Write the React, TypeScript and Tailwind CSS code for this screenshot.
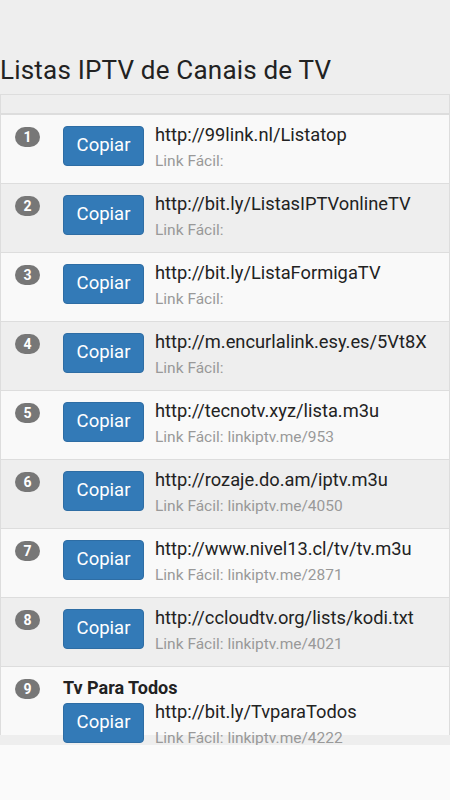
import React from 'react';

type Lista = {
  url: string;
  facil: string;
  title?: string;
};

const LISTAS: Lista[] = [
  { url: 'http://99link.nl/Listatop', facil: '' },
  { url: 'http://bit.ly/ListasIPTVonlineTV', facil: '' },
  { url: 'http://bit.ly/ListaFormigaTV', facil: '' },
  { url: 'http://m.encurlalink.esy.es/5Vt8X', facil: '' },
  { url: 'http://tecnotv.xyz/lista.m3u', facil: 'linkiptv.me/953' },
  { url: 'http://rozaje.do.am/iptv.m3u', facil: 'linkiptv.me/4050' },
  { url: 'http://www.nivel13.cl/tv/tv.m3u', facil: 'linkiptv.me/2871' },
  { url: 'http://ccloudtv.org/lists/kodi.txt', facil: 'linkiptv.me/4021' },
  { url: 'http://bit.ly/TvparaTodos', facil: 'linkiptv.me/4222', title: 'Tv Para Todos' },
];

function Row({ item, index }: { item: Lista; index: number }) {
  const odd = index % 2 === 0;
  return (
    <div
      className={`flex shrink-0 ${index > 0 ? 'h-[69px] border-t border-[#dddddd]' : 'h-[68px]'} ${
        odd ? 'bg-[#f9f9f9]' : 'bg-[#eeeeee]'
      }`}
    >
      {/* numero */}
      <div className="w-[54px] shrink-0 pl-[14px] pt-[12px]">
        <span className="flex h-[20px] w-[25px] items-center justify-center rounded-full bg-[#777777] text-[14px] font-bold leading-none text-white">
          {index + 1}
        </span>
      </div>

      <div className={`flex-1 pl-[8px] ${item.title ? 'pt-[9px]' : 'pt-[7px]'}`}>
        {item.title && (
          <div className="text-[18px] font-bold leading-[23px] text-[#222222]">{item.title}</div>
        )}
        <div className="flex items-start">
          <button className="mt-[4px] h-[40px] w-[81px] shrink-0 rounded-[4px] border border-[#2e6da4] bg-[#337ab7] text-[18.5px] text-white">
            Copiar
          </button>
          <div className="pl-[11px]">
            <div className="whitespace-nowrap text-[18.3px] leading-[25px] text-[#222222]">{item.url}</div>
            <div className="mt-[3px] whitespace-nowrap text-[15.5px] leading-[22px] text-[#999999]">
              Link Fácil:{item.facil ? ` ${item.facil}` : ''}
            </div>
          </div>
        </div>
      </div>
    </div>
  );
}

export default function App() {
  return (
    <div className="min-h-[800px] bg-[#fafafa]" style={{ fontFamily: 'Roboto, "Noto Sans", sans-serif' }}>
      <div className="flex h-[745px] flex-col overflow-hidden bg-[#eeeeee]">
        <h1 className="shrink-0 pt-[55px] text-[26px] font-normal leading-[30px] tracking-[0.2px] text-[#222222]">
          Listas IPTV de Canais de TV
        </h1>

        <div className="mt-[9px] flex flex-col border-x border-[#dddddd]">
          {/* cabeçalho vazio */}
          <div className="h-[21px] shrink-0 border-t border-b-2 border-[#dddddd]" />
          {LISTAS.map((item, i) => (
            <Row key={i} item={item} index={i} />
          ))}
        </div>
      </div>
    </div>
  );
}
